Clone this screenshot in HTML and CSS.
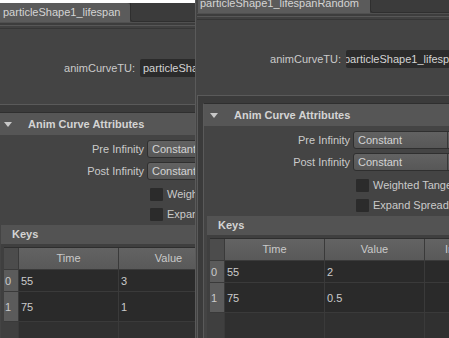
FILE: index.html
```html
<!DOCTYPE html>
<html>

<head>
  <meta charset="utf-8">
  <title>Attribute Editor</title>
  <link rel="stylesheet" href="styles.css">
</head>

<body>
  <!-- left window: particleShape1_lifespan -->
  <div class="window window-left">
    <div class="editor">
      <div class="tabbar">
        <div class="tab">particleShape1_lifespan</div>
        <div class="tab-rest"></div>
      </div>
      <div class="tabline"></div>
      <div class="node-row">
        <span class="label">animCurveTU:</span>
        <div class="field">particleShape1_lifespan</div>
      </div>
      <div class="scroll-frame">
        <div class="section">
          <div class="section-head"><span class="tri"></span>Anim Curve Attributes</div>
          <div class="section-body">
            <div class="attr-row">
              <span class="label">Pre Infinity</span>
              <div class="dropdown"><span>Constant</span></div>
            </div>
            <div class="attr-row">
              <span class="label">Post Infinity</span>
              <div class="dropdown"><span>Constant</span></div>
            </div>
            <div class="check-row"><span class="check"></span><span>Weighted Tangents</span></div>
            <div class="check-row"><span class="check"></span><span>Expand Spreadsheet</span></div>
            <div class="subsection">
              <div class="sub-head">Keys</div>
              <div class="sub-body">
                <div class="keys">
                  <div class="corner"></div>
                  <div class="col-head">Time</div>
                  <div class="col-head">Value</div>
                  <div class="col-head"></div>
                  <div class="row-head">0</div>
                  <div class="cell">55</div>
                  <div class="cell">3</div>
                  <div class="cell"></div>
                  <div class="row-head">1</div>
                  <div class="cell">75</div>
                  <div class="cell">1</div>
                  <div class="cell"></div>
                  <div class="row-fill"></div>
                  <div class="cell-fill"></div>
                  <div class="cell-fill"></div>
                  <div class="cell-fill"></div>
                </div>
              </div>
            </div>
          </div>
        </div>
      </div>
    </div>
  </div>

  <!-- right window: particleShape1_lifespanRandom -->
  <div class="window window-right">
    <div class="editor">
      <div class="tabbar">
        <div class="tab">particleShape1_lifespanRandom</div>
        <div class="tab-rest"></div>
      </div>
      <div class="tabline"></div>
      <div class="node-row">
        <span class="label">animCurveTU:</span>
        <div class="field field-scrolled">particleShape1_lifespanRandom</div>
      </div>
      <div class="scroll-frame">
        <div class="section">
          <div class="section-head"><span class="tri"></span>Anim Curve Attributes</div>
          <div class="section-body">
            <div class="attr-row">
              <span class="label">Pre Infinity</span>
              <div class="dropdown"><span>Constant</span></div>
            </div>
            <div class="attr-row">
              <span class="label">Post Infinity</span>
              <div class="dropdown"><span>Constant</span></div>
            </div>
            <div class="check-row"><span class="check"></span><span>Weighted Tangents</span></div>
            <div class="check-row"><span class="check"></span><span>Expand Spreadsheet</span></div>
            <div class="subsection">
              <div class="sub-head">Keys</div>
              <div class="sub-body">
                <div class="keys">
                  <div class="corner"></div>
                  <div class="col-head">Time</div>
                  <div class="col-head">Value</div>
                  <div class="col-head">In Tangent</div>
                  <div class="row-head">0</div>
                  <div class="cell">55</div>
                  <div class="cell">2</div>
                  <div class="cell"></div>
                  <div class="row-head">1</div>
                  <div class="cell">75</div>
                  <div class="cell">0.5</div>
                  <div class="cell"></div>
                  <div class="row-fill"></div>
                  <div class="cell-fill"></div>
                  <div class="cell-fill"></div>
                  <div class="cell-fill"></div>
                </div>
              </div>
            </div>
          </div>
        </div>
      </div>
    </div>
  </div>
</body>

</html>
```

FILE: styles.css
```css
/* Reset default styles */
body {
  margin: 0;
  padding: 0;
  background-color: #ffffff;
  font-family: "Liberation Sans", Arial, sans-serif;
  font-size: 11px;
  color: #cacaca;
}

/* Two attribute editor windows side by side */
.window {
  position: absolute;
  top: 0;
  height: 338px;
  overflow: hidden;
}

.window-left {
  left: 0;
  width: 195px;
}

.window-right {
  left: 195px;
  width: 253px;
  background-color: #444444;
  border-left: 1px solid #5a5a5a;
}

.editor {
  width: 320px;
  height: 360px;
  background-color: #444444;
}

.window-left .editor {
  margin-top: 3px;
  margin-left: -9px;
}

.window-right .editor {
  margin-top: -6px;
  margin-left: 1px;
}

/* Tabs */
.tabbar {
  display: flex;
  height: 19px;
}

.tab {
  margin-left: 1px;
  padding: 0 11px 0 2px;
  line-height: 19px;
  background-color: #5b5b5b;
  color: #d4d4d4;
  border-radius: 3px 3px 0 0;
  white-space: nowrap;
}

.window-left .tab {
  padding-left: 11px;
  padding-right: 10px;
}

.tab-rest {
  flex: 1;
  height: 18px;
  background-color: #3b3b3b;
  border-left: 1px solid #2f2f2f;
  border-bottom: 1px solid #2f2f2f;
  border-bottom-left-radius: 3px;
}

.tabline {
  height: 9px;
  background: linear-gradient(to bottom, #505050 0 1px, #3d3d3d 1px 3px, #575757 3px 4px, #414141 4px 6px, #363636 6px 7px, #444444 7px);
}

/* Node name row */
.node-row {
  display: flex;
  align-items: center;
  height: 18px;
  margin-top: 28px;
  margin-bottom: 27px;
}

.node-row .label {
  width: 144px;
  text-align: right;
  margin-right: 5px;
}

.field {
  flex: 1;
  height: 18px;
  line-height: 18px;
  padding-left: 3px;
  background-color: #2b2b2b;
  color: #d4d4d4;
  white-space: nowrap;
  overflow: hidden;
  border-radius: 2px;
}

.field-scrolled {
  text-indent: -5px;
}

/* Frames */
.scroll-frame {
  padding: 7px 0 0 5px;
  background-color: #3b3b3b;
  border-top: 1px solid #5a5a5a;
  border-left: 1px solid #5a5a5a;
  height: 300px;
}

.section {
  border-left: 1px solid #5a5a5a;
  border-top: 1px solid #2f2f2f;
  background-color: #444444;
  height: 300px;
}

.section-head {
  display: flex;
  align-items: center;
  height: 22px;
  padding-left: 6px;
  background-color: #565656;
  font-weight: bold;
  color: #d4d4d4;
}

.tri {
  width: 0;
  height: 0;
  border-left: 4px solid transparent;
  border-right: 4px solid transparent;
  border-top: 5px solid #c8c8c8;
  margin-right: 16px;
}

.section-body {
  padding-top: 5px;
}

.attr-row {
  display: grid;
  grid-template-columns: 146px 110px;
  column-gap: 3px;
  height: 18px;
  margin-bottom: 4px;
  align-items: center;
}

.attr-row .label {
  text-align: right;
}

.dropdown {
  height: 18px;
  line-height: 16px;
  box-sizing: border-box;
  padding-left: 4px;
  background: linear-gradient(to bottom, #626262, #575757);
  border: 1px solid #2f2f2f;
  border-radius: 3px;
  color: #d4d4d4;
  position: relative;
}

.dropdown::after {
  content: "";
  position: absolute;
  left: 93px;
  top: 0;
  bottom: 0;
  width: 1px;
  background-color: #383838;
}

.check-row {
  display: flex;
  align-items: center;
  height: 20px;
  padding-left: 152px;
  white-space: nowrap;
}

.check {
  width: 13px;
  height: 13px;
  margin-right: 4px;
  background-color: #2b2b2b;
  border-radius: 1px;
}

/* Keys sub-frame */
.subsection {
  margin: 1px 0 0 3px;
}

.sub-head {
  height: 19px;
  line-height: 19px;
  padding-left: 11px;
  background-color: #535353;
  font-weight: bold;
  color: #d4d4d4;
}

.sub-body {
  padding: 3px 0 0 3px;
  background-color: #3f3f3f;
}

.keys {
  display: grid;
  grid-template-columns: 14px 99px 99px 88px 60px;
  grid-template-rows: 21px 21px 29px 40px;
  gap: 1px;
  border-top: 1px solid #2e2e2e;
  background-color: #3a3a3a;
}

.corner {
  background-color: #4c4c4c;
}

.col-head {
  background: linear-gradient(to bottom, #636363, #595959);
  text-align: center;
  line-height: 21px;
}

.keys .col-head:nth-child(4) {
  grid-column: span 2;
  text-align: left;
  padding-left: 20px;
}

.row-head {
  background-color: #5b5b5b;
  padding-left: 1px;
  display: flex;
  align-items: center;
}

.cell {
  background-color: #2a2a2a;
  padding-left: 2px;
  display: flex;
  align-items: center;
}

.keys .cell:nth-child(8),
.keys .cell:nth-child(12) {
  grid-column: span 2;
}

.row-fill {
  background-color: #3f3f3f;
}

.cell-fill {
  background-color: #303030;
}

.keys .cell-fill:last-child {
  grid-column: span 2;
}
```
